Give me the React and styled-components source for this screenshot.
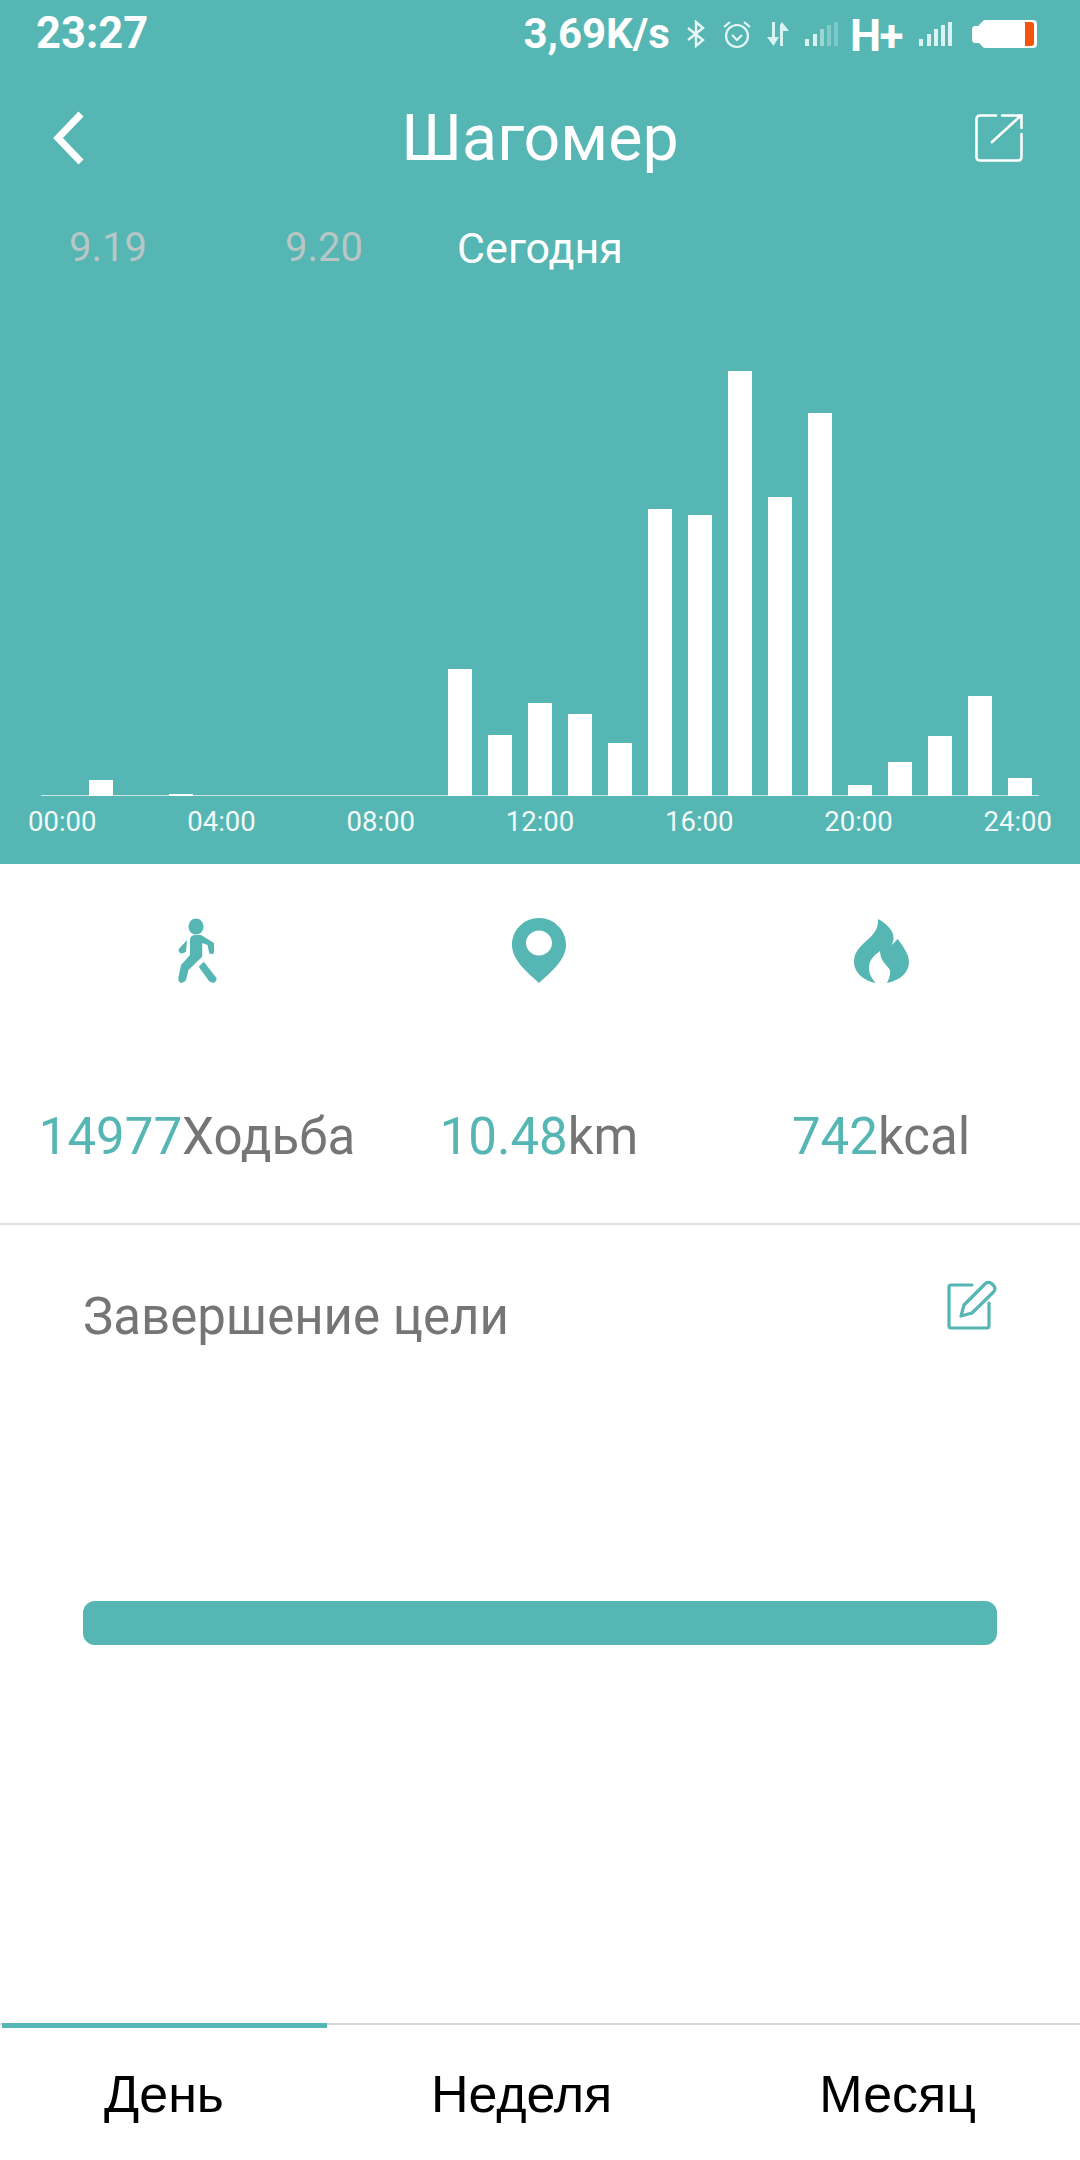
import React from "react";
import styled, { createGlobalStyle } from "styled-components";

const TEAL = "#55b6b3";

const Global = createGlobalStyle`
  html, body { margin: 0; padding: 0; background: #fff; }
  body { font-family: Roboto, "Noto Sans", sans-serif; }
  * { box-sizing: border-box; }
`;

const Page = styled.div`
  width: 1080px;
  height: 2160px;
  display: flex;
  flex-direction: column;
  background: #fff;
  overflow: hidden;
`;

const Header = styled.header`
  height: 864px;
  background: ${TEAL};
  display: flex;
  flex-direction: column;
  color: #fff;
`;

const StatusBar = styled.div`
  height: 68px;
  display: flex;
  align-items: center;
  padding: 0 42px 0 36px;
  font-weight: 500;
`;

const Clock = styled.span`
  font-size: 43.5px;
  font-weight: 700;
  line-height: 68px;
  margin-right: auto;
`;

const Speed = styled.span`
  font-size: 42px;
  font-weight: 700;
  line-height: 68px;
  margin-right: 17px;
`;

const StatusIcon = styled.svg`
  display: block;
  flex: none;
  margin-right: ${(p) => p.$gap ?? 0}px;
`;

const Network = styled.span`
  font-size: 44px;
  font-weight: 700;
  line-height: 68px;
  margin: 4px 17px 0 11px;
  letter-spacing: -1.5px;
`;

const NavBar = styled.div`
  height: 136px;
  display: flex;
  align-items: center;
  justify-content: space-between;
  padding: 4px 57px 0 52px;
  position: relative;
`;

const Title = styled.h1`
  position: absolute;
  left: 0;
  right: 0;
  top: 2px;
  margin: 0;
  text-align: center;
  font-size: 64.5px;
  font-weight: 400;
  line-height: 136px;
`;

const NavIcon = styled.svg`
  display: block;
  position: relative;
`;

const DateTabs = styled.div`
  display: grid;
  grid-template-columns: repeat(5, 216px);
  height: 60px;
  margin-top: 14px;
`;

const DateTab = styled.span`
  text-align: center;
  font-size: ${(p) => (p.$active ? 43 : 40)}px;
  line-height: 60px;
  color: ${(p) => (p.$active ? "#ffffff" : "#b9c6c5")};
`;

const Chart = styled.div`
  margin: 0 41px;
  height: 518px;
  padding-left: 8px;
  display: flex;
  align-items: flex-end;
  gap: 15.95px;
  border-bottom: 1px solid #c9e6e4;
`;

const Bar = styled.div`
  flex: none;
  width: 24px;
  background: #fff;
  position: relative;
  margin-bottom: -1px;
`;

const AxisLabels = styled.div`
  display: flex;
  justify-content: space-between;
  padding: 8px 28px 0 28px;
`;

const AxisLabel = styled.span`
  font-size: 27.5px;
  line-height: 36px;
  color: #f2fbfa;
`;

const Stats = styled.section`
  height: 361px;
  padding: 54px 28px 0 26px;
  display: grid;
  grid-template-columns: repeat(3, 342px);
  border-bottom: 2px solid #e0e0e0;
`;

const Stat = styled.div`
  display: flex;
  flex-direction: column;
  align-items: center;
`;

const StatIconBox = styled.div`
  height: 65px;
  display: flex;
  justify-content: center;
  align-items: flex-start;
  margin-bottom: 118px;
`;

const StatText = styled.div`
  font-size: 51px;
  line-height: 72px;
  color: #757575;
  white-space: nowrap;
`;

const StatNumber = styled.span`
  color: ${TEAL};
`;

const Goal = styled.section`
  flex: 1;
  padding: 50px 83px 0;
  display: flex;
  flex-direction: column;
`;

const GoalHead = styled.div`
  display: flex;
  justify-content: space-between;
  align-items: flex-start;
`;

const GoalTitle = styled.h2`
  margin: 0;
  font-size: 51px;
  font-weight: 400;
  line-height: 84px;
  color: #757575;
`;

const Progress = styled.div`
  height: 44px;
  margin-top: 242px;
  border-radius: 12px;
  background: ${TEAL};
`;

const BottomTabs = styled.nav`
  height: 137px;
  border-top: 2px solid #d8d8d8;
  display: flex;
  justify-content: space-between;
  padding: 0 104px 0 104px;
  position: relative;
  font-family: "Liberation Sans", Arial, sans-serif;
`;

const ActiveLine = styled.div`
  position: absolute;
  left: 2px;
  top: -2px;
  width: 325px;
  height: 5px;
  background: ${TEAL};
`;

const BottomTab = styled.span`
  font-size: 52px;
  line-height: 138px;
  color: #000;
`;

const heights = [0, 16, 0, 2, 0, 0, 0, 0, 0, 0, 127, 61, 93, 82, 53, 287, 281, 425, 299, 383, 11, 34, 60, 100, 18];
const hours = ["00:00", "04:00", "08:00", "12:00", "16:00", "20:00", "24:00"];

const Signal = ({ dim }) => (
  <StatusIcon width="34" height="24" viewBox="0 0 34 24" $gap={0} fill="#d8f3f1">
    <rect x="0" y="17" width="4" height="7" />
    <rect x="8" y="12" width="4" height="12" />
    <rect x="15" y="7" width="4" height="17" opacity={dim ? 0.55 : 1} />
    <rect x="22" y="3" width="4" height="21" opacity={dim ? 0.35 : 1} />
    <rect x="29" y="0" width="4" height="24" opacity={dim ? 0.3 : 1} />
  </StatusIcon>
);

export default function App() {
  return (
    <Page>
      <Global />
      <Header>
        <StatusBar>
          <Clock>23:27</Clock>
          <Speed>3,69K/s</Speed>
          <StatusIcon width="18" height="28" viewBox="0 0 18 28" $gap={17} fill="none" stroke="#e6f7f6" strokeWidth="2.4">
            <path d="M1 8 L16 20 L9 26 V2 L16 8 L1 20" />
          </StatusIcon>
          <StatusIcon width="30" height="29" viewBox="0 0 30 29" $gap={14} fill="none" stroke="#e6f7f6" strokeWidth="2.2">
            <circle cx="15" cy="16" r="11" />
            <path d="M10 15 L15 20 L20 15" />
            <path d="M2 7 L8 2 M22 2 L28 7" />
          </StatusIcon>
          <StatusIcon width="24" height="24" viewBox="0 0 24 24" $gap={15} fill="#d8f3f1">
            <path d="M6 0 H9 V15 H13 L7.5 24 L1 15 H6 Z" />
            <path d="M14 24 H17 V9 H23 L16 0 L14 3 Z" />
          </StatusIcon>
          <Signal dim />
          <Network>H+</Network>
          <Signal />
          <StatusIcon width="66" height="28" viewBox="0 0 66 28" style={{ marginLeft: 19 }}>
            <path d="M12 0 H61 Q65 0 65 4 V24 Q65 28 61 28 H12 L7 23 H3 Q0 23 0 19 V10 Q0 6 3 6 H6 Z" fill="#fff" />
            <path d="M53 2 H59 Q62 2 62 5 V23 Q62 26 59 26 H53 Z" fill="#f4530c" />
          </StatusIcon>
        </StatusBar>
        <NavBar>
          <Title>Шагомер</Title>
          <NavIcon width="33" height="54" viewBox="0 0 33 54" fill="none" stroke="#fff" strokeWidth="7" strokeLinejoin="miter">
            <path d="M29 3 L6 27 L29 51" />
          </NavIcon>
          <NavIcon width="48" height="48" viewBox="0 0 48 48" fill="none" stroke="#fff" strokeWidth="2.6" strokeLinecap="round">
            <path d="M21 1.5 H5 Q1.5 1.5 1.5 5 V43 Q1.5 46.5 5 46.5 H43 Q46.5 46.5 46.5 43 V20" />
            <path d="M17 28 L46 1.5 M27 1.5 H46.5 V14" />
          </NavIcon>
        </NavBar>
        <DateTabs>
          <DateTab>9.19</DateTab>
          <DateTab>9.20</DateTab>
          <DateTab $active>Сегодня</DateTab>
        </DateTabs>
        <Chart>
          {heights.map((h, i) => (
            <Bar key={i} style={{ height: h }} />
          ))}
        </Chart>
        <AxisLabels>
          {hours.map((h) => (
            <AxisLabel key={h}>{h}</AxisLabel>
          ))}
        </AxisLabels>
      </Header>
      <Stats>
        <Stat>
          <StatIconBox>
            <svg width="39" height="65" viewBox="0 0 39 65" fill={TEAL}>
              <ellipse cx="18" cy="8.5" rx="7.5" ry="8" />
              <path d="M23 17 L36 25 V34 Q36 36 33 36 Q31 36 31 34 L29.5 27 L24.2 25 V38.7 L10.5 52 L8 62 Q6 65 3 65 Q0 64 0.3 60 L3 47 L12 37 V22 Q12 17 18 17 Z" />
              <path d="M9 22 L0.8 31 Q0 34 3 35.5 Q6 35.5 8 33.5 Z" />
              <path d="M25.8 43.7 L20.7 48.7 L31 63 Q33.5 65.5 36.5 64.5 Q39 62.5 38.5 60 Z" />
            </svg>
          </StatIconBox>
          <StatText>
            <StatNumber>14977</StatNumber>Ходьба
          </StatText>
        </Stat>
        <Stat>
          <StatIconBox>
            <svg width="54" height="65" viewBox="0 0 54 65" fill={TEAL} fillRule="evenodd">
              <path d="M27 0C12 0 0 12 0 27C0 42 16 55 27 65C38 55 54 42 54 27C54 12 42 0 27 0ZM27 12.5C34.2 12.5 40 18.1 40 25C40 31.9 34.2 37.5 27 37.5C19.8 37.5 14 31.9 14 25C14 18.1 19.8 12.5 27 12.5Z" />
            </svg>
          </StatIconBox>
          <StatText>
            <StatNumber>10.48</StatNumber>km
          </StatText>
        </Stat>
        <Stat>
          <StatIconBox>
            <svg width="55" height="65" viewBox="0 0 55 65" fill={TEAL}>
              <path d="M24 1 C34 6 40 14 39.5 20 C39.5 23 38.5 25 38 27 L43.6 21 C50 29 55 37 55 44 C55 54 47 62 33 65 C36 59 37 55 35.5 51 C31 46 26 41 26 33 C19 38 15 43 15 50 C15 56 18 61 22 65 C9 63 0 54 0 44 C0 37 3 32 8 27 C15 20 25 14 24 1 Z" />
            </svg>
          </StatIconBox>
          <StatText>
            <StatNumber>742</StatNumber>kcal
          </StatText>
        </Stat>
      </Stats>
      <Goal>
        <GoalHead>
          <GoalTitle>Завершение цели</GoalTitle>
          <svg width="50" height="50" viewBox="0 0 50 50" fill="none" stroke={TEAL} strokeWidth="3.2" strokeLinecap="round" strokeLinejoin="round" style={{ marginTop: 5 }}>
            <path d="M25 5 H4 Q2 5 2 7 V46 Q2 48 4 48 H40 Q42 48 42 46 V23" />
            <path d="M14 36 L17 25 L38 4 Q41 1 44.5 3.5 L47 6 Q49 9 46.5 12 L25 33 Z" />
          </svg>
        </GoalHead>
        <Progress />
      </Goal>
      <BottomTabs>
        <ActiveLine />
        <BottomTab>День</BottomTab>
        <BottomTab>Неделя</BottomTab>
        <BottomTab>Месяц</BottomTab>
      </BottomTabs>
    </Page>
  );
}
